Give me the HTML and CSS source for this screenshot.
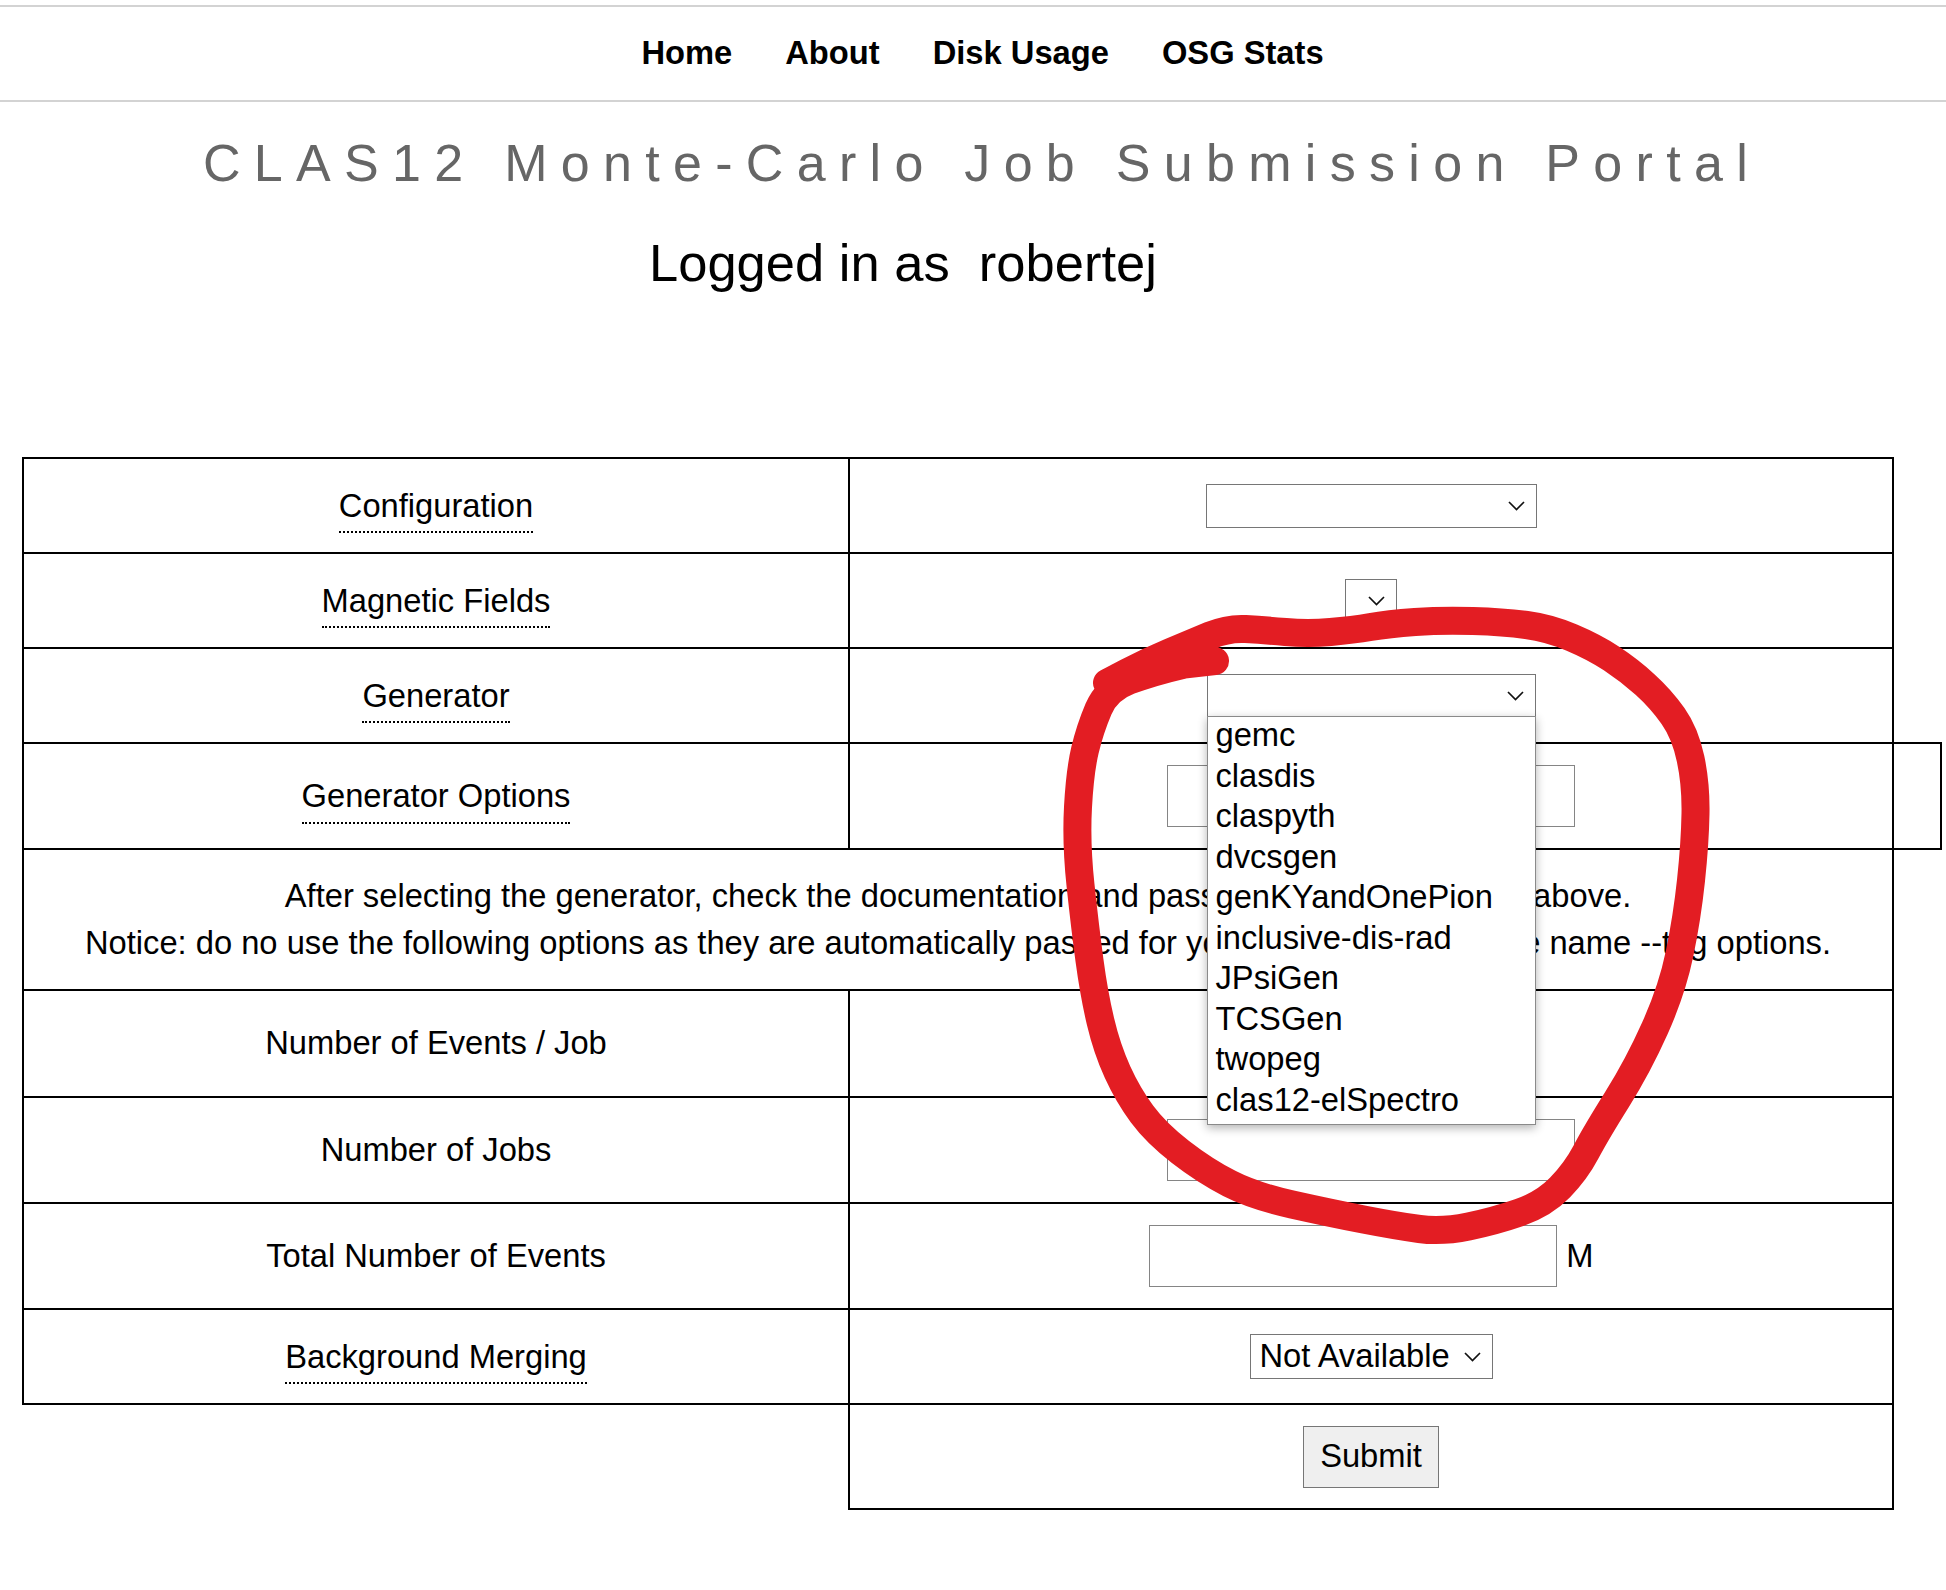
FILE: index.html
```html
<!DOCTYPE html>
<html lang="en">
<head>
<meta charset="utf-8">
<title>CLAS12 Monte-Carlo Job Submission Portal</title>
<link rel="stylesheet" href="styles.css">
</head>
<body>
<nav class="topnav">
  <a href="#">Home</a>
  <a href="#">About</a>
  <a href="#">Disk Usage</a>
  <a href="#">OSG Stats</a>
</nav>

<h1 class="title">CLAS12 Monte-Carlo Job Submission Portal</h1>
<h2 class="user">Logged in as&nbsp; robertej</h2>

<form class="job-form" action="#">
<table class="form-table">
  <colgroup>
    <col class="c-label">
    <col class="c-field">
    <col class="c-extra">
  </colgroup>
  <tr class="r-a">
    <td><span class="term">Configuration</span></td>
    <td>
      <div class="select w-config">
        <svg class="chev" width="17" height="10" viewBox="0 0 17 10"><path d="M1 1 L8.5 8.5 L16 1"/></svg>
      </div>
    </td>
  </tr>
  <tr class="r-a">
    <td><span class="term">Magnetic Fields</span></td>
    <td>
      <div class="select w-mag">
        <svg class="chev" width="17" height="10" viewBox="0 0 17 10"><path d="M1 1 L8.5 8.5 L16 1"/></svg>
      </div>
    </td>
  </tr>
  <tr class="r-a">
    <td><span class="term">Generator</span></td>
    <td>
      <div class="select-wrap">
        <div class="select open w-gen">
          <svg class="chev" width="17" height="10" viewBox="0 0 17 10"><path d="M1 1 L8.5 8.5 L16 1"/></svg>
        </div>
        <ul class="listbox">
          <li>gemc</li>
          <li>clasdis</li>
          <li>claspyth</li>
          <li>dvcsgen</li>
          <li>genKYandOnePion</li>
          <li>inclusive-dis-rad</li>
          <li>JPsiGen</li>
          <li>TCSGen</li>
          <li>twopeg</li>
          <li>clas12-elSpectro</li>
        </ul>
      </div>
    </td>
  </tr>
  <tr class="r-b">
    <td><span class="term">Generator Options</span></td>
    <td><input class="text-input" type="text"></td>
    <td class="extra"></td>
  </tr>
  <tr class="r-notice">
    <td colspan="2" class="notice">After selecting the generator, check the documentation and pass its options in the box above.<br>Notice: do no use the following options as they are automatically passed for you: its gcard, output file name --trig options.</td>
  </tr>
  <tr class="r-c">
    <td>Number of Events / Job</td>
    <td><input class="text-input w-small" type="text"></td>
  </tr>
  <tr class="r-b">
    <td>Number of Jobs</td>
    <td><input class="text-input" type="text"></td>
  </tr>
  <tr class="r-b">
    <td>Total Number of Events</td>
    <td>
      <div class="with-unit"><input class="text-input" type="text"><span class="unit">M</span></div>
    </td>
  </tr>
  <tr class="r-a">
    <td><span class="term">Background Merging</span></td>
    <td>
      <div class="select w-bg">
        <span class="select-value">Not Available</span>
        <svg class="chev" width="17" height="10" viewBox="0 0 17 10"><path d="M1 1 L8.5 8.5 L16 1"/></svg>
      </div>
    </td>
  </tr>
  <tr class="r-submit">
    <td class="blank"></td>
    <td><button type="submit" class="submit">Submit</button></td>
  </tr>
</table>
</form>

<svg class="annotation" width="1946" height="1590" viewBox="0 0 1946 1590" aria-hidden="true">
  <path d="M1215 661 L1184 664.5 Q1152 672 1129.5 680.5 Q1107 689 1098.5 709 Q1090 729 1085 750 Q1080 771 1078 807 Q1076 843 1080.5 885 Q1085 927 1089.5 960.5 Q1094 994 1100.5 1021.5 Q1107 1049 1117.5 1072 Q1128 1095 1142 1114 Q1156 1133 1180.5 1152 Q1205 1171 1229.5 1183.5 Q1254 1196 1292 1204.5 Q1330 1213 1363.5 1219.5 Q1397 1226 1419.5 1229 Q1442 1232 1468.5 1226.5 Q1495 1221 1519.5 1212.5 Q1544 1204 1560 1187.5 Q1576 1171 1586 1152 Q1596 1133 1617 1099.5 Q1638 1066 1655 1028 Q1672 990 1679.5 954 Q1687 918 1691 880.5 Q1695 843 1695.5 813.5 Q1696 784 1690.5 758.5 Q1685 733 1673 716 Q1661 699 1645 684.5 Q1629 670 1611.5 658.5 Q1594 647 1571.5 637.5 Q1549 628 1526.5 625 Q1504 622 1473 621 Q1442 620 1415 622 Q1388 624 1370.5 627 Q1353 630 1330.5 632 Q1308 634 1285.5 632 Q1263 630 1245.5 629 Q1228 628 1210 635.5 Q1192 643 1169.5 652.5 Q1147 662 1127 672.5 L1107 683"/>
</svg>
</body>
</html>
```

FILE: styles.css
```css
html, body {
  margin: 0;
  padding: 0;
}

body {
  position: relative;
  font-family: "Liberation Sans", Arial, Helvetica, sans-serif;
  font-size: 32.7px;
  line-height: 46.7px;
  color: #000;
  background: #fff;
}

/* ---------- top navigation ---------- */
.topnav {
  margin-top: 5px;
  height: 93px;
  border-top: 2px solid #d3d3d3;
  border-bottom: 2px solid #d3d3d3;
  display: flex;
  justify-content: center;
  align-items: center;
  gap: 53px;
  padding-left: 19px;
}

.topnav a {
  color: #000;
  font-weight: bold;
  font-size: 32.7px;
  text-decoration: none;
}

/* ---------- headings ---------- */
.title {
  margin: 31px 0 0;
  padding-left: 18px;
  font-size: 52px;
  line-height: 60px;
  font-weight: normal;
  color: #666;
  letter-spacing: 13.3px;
  text-align: center;
}

.user {
  margin: 40px 0 0;
  padding-left: 649px;
  font-size: 52.5px;
  line-height: 60px;
  font-weight: normal;
  text-align: left;
}

/* ---------- form table ---------- */
.job-form {
  margin: 0;
}

.form-table {
  margin: 164px 0 0 22px;
  border-collapse: collapse;
  table-layout: fixed;
  width: 1920px;
}

.c-label { width: 826px; }
.c-field { width: 1044px; }
.c-extra { width: 48px; }

.form-table td {
  border: 2px solid #000;
  padding: 0;
  text-align: center;
  vertical-align: middle;
}

.form-table td.blank {
  border: none;
}

.r-a > td { height: 93px; }
.r-b > td { height: 104px; }
.r-c > td { height: 105px; }
.r-notice > td { height: 139px; }
.r-submit > td { height: 103px; }

.term {
  display: inline-block;
  line-height: 46.7px;
  padding-top: 5px;
  padding-bottom: 2px;
  border-bottom: 2px dotted #000;
}

/* ---------- controls ---------- */
.select {
  display: flex;
  align-items: center;
  justify-content: flex-end;
  box-sizing: border-box;
  height: 44px;
  margin: 0 auto;
  padding: 0 11px 0 9px;
  border: 1px solid #767676;
  background: #fff;
  text-align: left;
}

.w-config { width: 331px; }
.w-mag { width: 52px; }
.w-bg {
  width: 243px;
  justify-content: space-between;
  height: 45px;
}

.select-wrap {
  position: relative;
  width: 329px;
  margin: 0 auto;
}

.w-gen {
  width: 100%;
  height: 43px;
}

.chev {
  flex: none;
  display: block;
}

.chev path {
  fill: none;
  stroke: #111;
  stroke-width: 1.7;
}

.select-value {
  white-space: nowrap;
}

.listbox {
  position: absolute;
  top: calc(100% - 1px);
  left: 0;
  right: 0;
  z-index: 5;
  margin: 0;
  padding: 0 0 2px;
  list-style: none;
  background: #fff;
  border: 1px solid #8a8a8a;
  box-shadow: 0 3px 9px rgba(0, 0, 0, 0.3);
  text-align: left;
}

.listbox li {
  box-sizing: border-box;
  height: 40.5px;
  padding: 0 8px 4.5px;
  line-height: 36px;
  white-space: nowrap;
}

.text-input {
  display: block;
  box-sizing: border-box;
  width: 408px;
  height: 62px;
  margin: 0 auto;
  padding: 0 4px;
  border: 1px solid #858585;
  background: #fff;
  font: inherit;
}

.w-small {
  width: 300px;
}

.with-unit {
  display: flex;
  justify-content: center;
  align-items: center;
  gap: 9.5px;
}

.with-unit .text-input {
  margin: 0;
}

.submit {
  display: block;
  box-sizing: border-box;
  width: 136px;
  height: 62px;
  margin: 0 auto;
  padding: 0;
  border: 1px solid #767676;
  background: #efefef;
  color: #000;
  font: inherit;
  line-height: 1;
}

/* ---------- hand-drawn annotation ---------- */
.annotation {
  position: absolute;
  left: 0;
  top: 0;
  z-index: 10;
  pointer-events: none;
}

.annotation path {
  fill: none;
  stroke: #e31d23;
  stroke-width: 28;
  stroke-linecap: round;
  stroke-linejoin: round;
}
```
